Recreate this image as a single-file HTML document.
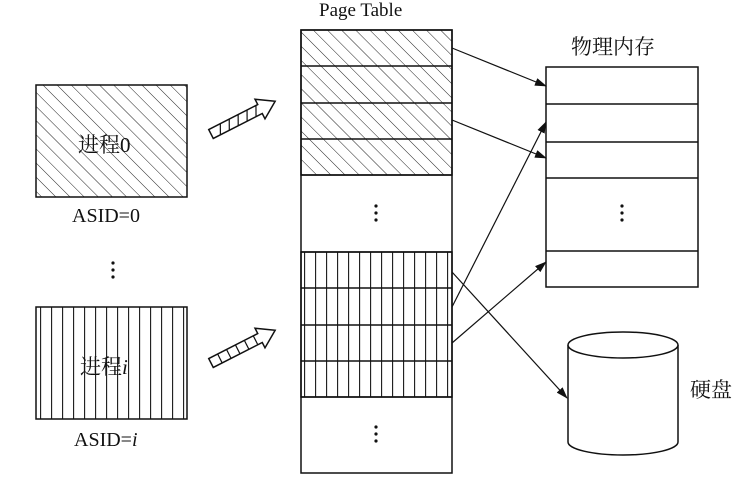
<!DOCTYPE html>
<html><head><meta charset="utf-8"><style>
html,body{margin:0;padding:0;background:#fff;}
svg{display:block;}
text{font-family:"Liberation Serif","Noto Serif CJK SC",serif;fill:#111;}
</style></head><body>
<svg width="745" height="481" viewBox="0 0 745 481" xmlns="http://www.w3.org/2000/svg">
<defs>
<pattern id="diag" patternUnits="userSpaceOnUse" width="10" height="10" patternTransform="rotate(-45)">
<line x1="0" y1="0" x2="0" y2="10" stroke="#222" stroke-width="1"/>
</pattern>
<pattern id="vert" patternUnits="userSpaceOnUse" width="11" height="10" x="40">
<line x1="0.5" y1="0" x2="0.5" y2="10" stroke="#222" stroke-width="1.3"/>
</pattern>
<marker id="ah" markerWidth="12" markerHeight="8" refX="11" refY="4" orient="auto" markerUnits="userSpaceOnUse">
<path d="M0,0 L12,4 L0,8 Z" fill="#111"/>
</marker>
</defs>
<g stroke="#111" fill="none" stroke-width="1.5">
<rect x="36" y="85" width="151" height="112" fill="url(#diag)"/>
<rect x="36" y="307" width="151" height="112" fill="url(#vert)"/>
<rect x="301" y="30" width="151" height="145" fill="url(#diag)"/>
<rect x="301" y="252" width="151" height="145" fill="url(#vert)"/>
<rect x="301" y="30" width="151" height="443"/>
<line x1="301" y1="66" x2="452" y2="66"/>
<line x1="301" y1="103" x2="452" y2="103"/>
<line x1="301" y1="139" x2="452" y2="139"/>
<line x1="301" y1="175" x2="452" y2="175"/>
<line x1="301" y1="252" x2="452" y2="252"/>
<line x1="301" y1="288" x2="452" y2="288"/>
<line x1="301" y1="325" x2="452" y2="325"/>
<line x1="301" y1="361" x2="452" y2="361"/>
<line x1="301" y1="397" x2="452" y2="397"/>
<rect x="546" y="67" width="152" height="220" fill="#fff"/>
<line x1="546" y1="104" x2="698" y2="104"/>
<line x1="546" y1="142" x2="698" y2="142"/>
<line x1="546" y1="178" x2="698" y2="178"/>
<line x1="546" y1="251" x2="698" y2="251"/>
<path d="M568,345 L568,442 A55,13 0 0 0 678,442 L678,345" fill="#fff"/>
<ellipse cx="623" cy="345" rx="55" ry="13" fill="#fff"/>
<g stroke-width="1.2" marker-end="url(#ah)">
<line x1="452" y1="48" x2="546" y2="86"/>
<line x1="452" y1="120" x2="546" y2="158"/>
<line x1="452" y1="307" x2="546" y2="122"/>
<line x1="452" y1="343" x2="546" y2="262"/>
<line x1="452" y1="272" x2="567" y2="398"/>
</g>
<g transform="translate(211,134) rotate(-27)">
<path d="M0,-5 L55,-5 L55,-11 L72,0 L55,11 L55,5 L0,5 Z" fill="#fff" stroke-width="1.5"/>
<g stroke-width="1.2"><line x1="8" y1="5" x2="13" y2="-5"/><line x1="18" y1="5" x2="23" y2="-5"/><line x1="28" y1="5" x2="33" y2="-5"/><line x1="38" y1="5" x2="43" y2="-5"/><line x1="48" y1="5" x2="53" y2="-5"/></g>
</g>
<g transform="translate(211,363) rotate(-27)">
<path d="M0,-5 L55,-5 L55,-11 L72,0 L55,11 L55,5 L0,5 Z" fill="#fff" stroke-width="1.5"/>
<g stroke-width="1.2"><line x1="10" y1="5" x2="10" y2="-5"/><line x1="20" y1="5" x2="20" y2="-5"/><line x1="30" y1="5" x2="30" y2="-5"/><line x1="40" y1="5" x2="40" y2="-5"/><line x1="50" y1="5" x2="50" y2="-5"/></g>
</g>
</g>
<g fill="#111">
<circle cx="113" cy="263" r="1.6"/><circle cx="113" cy="270" r="1.6"/><circle cx="113" cy="277" r="1.6"/>
<circle cx="376" cy="206" r="1.6"/><circle cx="376" cy="213" r="1.6"/><circle cx="376" cy="220" r="1.6"/>
<circle cx="376" cy="427" r="1.6"/><circle cx="376" cy="434" r="1.6"/><circle cx="376" cy="441" r="1.6"/>
<circle cx="622" cy="206" r="1.6"/><circle cx="622" cy="213" r="1.6"/><circle cx="622" cy="220" r="1.6"/>
</g>
<text x="78" y="152" font-size="21">进程0</text>
<text x="80" y="374" font-size="21">进程<tspan font-style="italic">i</tspan></text>
<text x="72" y="222" font-size="20">ASID=0</text>
<text x="74" y="446" font-size="20">ASID=<tspan font-style="italic">i</tspan></text>
<text x="319" y="16" font-size="19">Page Table</text>
<text x="571" y="54" font-size="21">物理内存</text>
<text x="690" y="397" font-size="21">硬盘</text>
</svg>
</body></html>
